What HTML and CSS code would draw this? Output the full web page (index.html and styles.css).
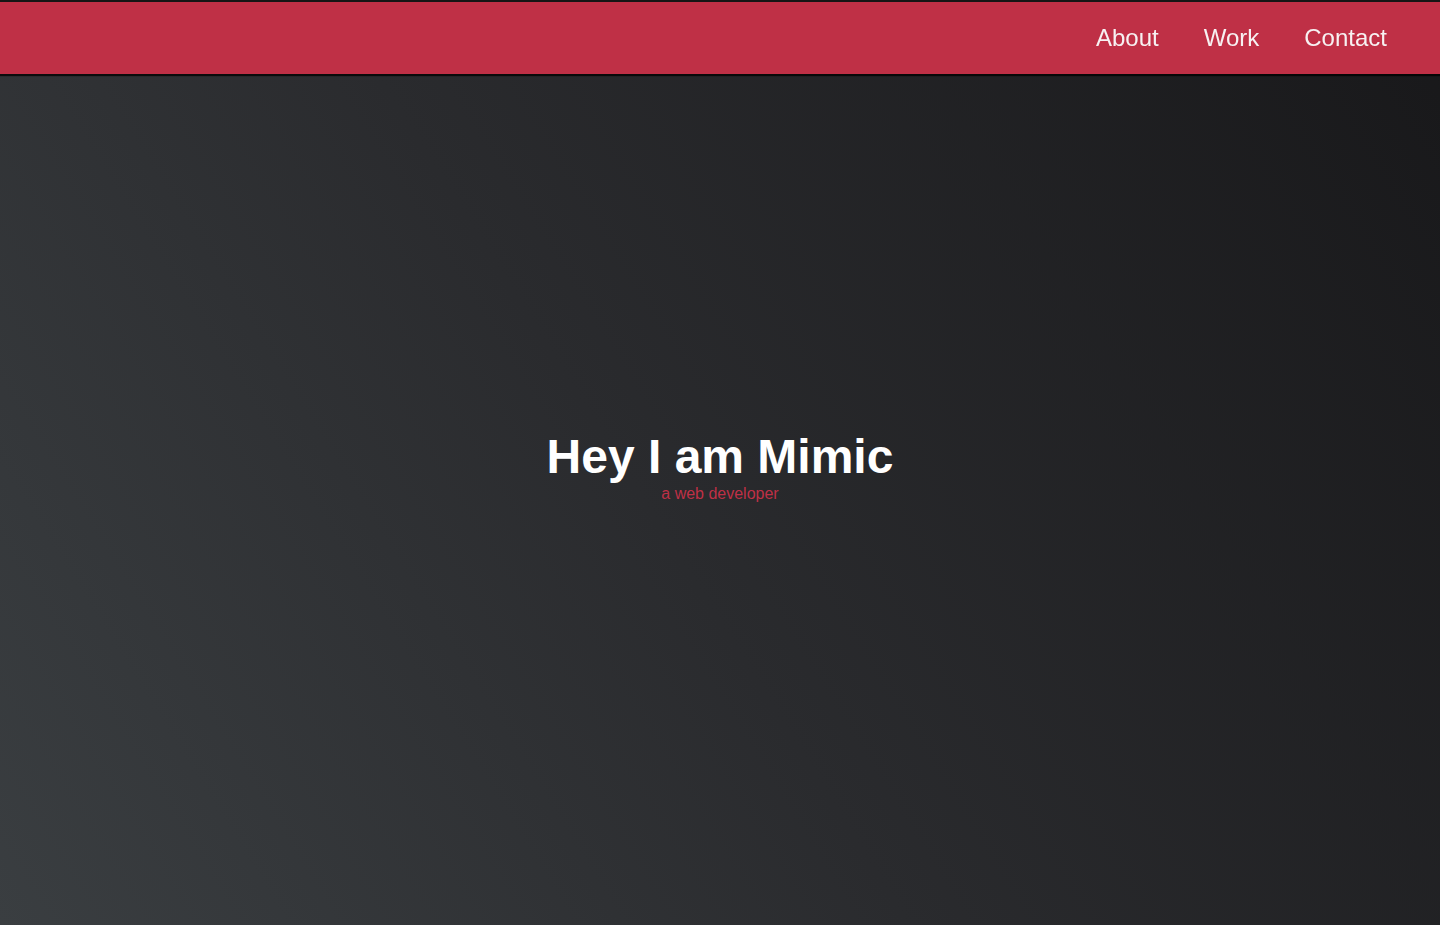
FILE: index.html
```html
<!DOCTYPE html>
<html lang="en">
<head>
<meta charset="utf-8">
<title>Mimic</title>
<link rel="stylesheet" href="styles.css">
</head>
<body>
<header class="site-header">
  <nav class="nav">
    <a class="nav-link" href="#about">About</a>
    <a class="nav-link" href="#work">Work</a>
    <a class="nav-link" href="#contact">Contact</a>
  </nav>
</header>
<main class="hero">
  <div class="hero-text">
    <h1 class="hero-title">Hey I am Mimic</h1>
    <p class="hero-sub">a web developer</p>
  </div>
</main>
</body>
</html>
```
FILE: styles.css
```css
html, body {
  margin: 0;
  padding: 0;
  height: 100%;
}
body {
  font-family: "Liberation Sans", Arial, sans-serif;
  background: linear-gradient(58deg, #3a3e41 0%, #2a2b2e 45%, #18181a 100%);
  color: #fff;
  overflow: hidden;
}
.site-header {
  position: fixed;
  top: 0;
  left: 0;
  right: 0;
  height: 72px;
  background: #bf3046;
  border-top: 2px solid #151515;
  box-shadow: 0 2px 1px rgba(0, 0, 0, 0.75);
  display: flex;
  justify-content: flex-end;
  align-items: center;
  padding-right: 53px;
  z-index: 2;
}
.nav {
  display: flex;
  gap: 45px;
}
.nav-link {
  color: #f7f1f2;
  text-decoration: none;
  font-size: 24px;
}
.hero {
  height: 100vh;
  display: flex;
  align-items: center;
  justify-content: center;
  padding-top: 6px;
  box-sizing: border-box;
}
.hero-text {
  text-align: center;
}
.hero-title {
  margin: 0;
  font-size: 48px;
  font-weight: bold;
  color: #fff;
}
.hero-sub {
  margin: 1px 0 0;
  font-size: 16px;
  color: #bf3046;
}
```
